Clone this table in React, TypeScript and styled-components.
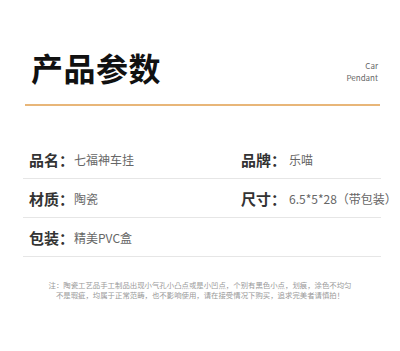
import styled, { createGlobalStyle } from 'styled-components';

const GlobalStyle = createGlobalStyle`
  body {
    margin: 0;
    background: #fff;
    font-family: "Noto Sans CJK SC", "Noto Sans", sans-serif;
  }
`;

const Page = styled.div`
  width: 400px;
  height: 351px;
  overflow: hidden;
  background: #fff;
`;

const Header = styled.header`
  display: flex;
  justify-content: space-between;
  align-items: flex-end;
  padding: 51px 22px 0 31px;
`;

const Title = styled.h1`
  margin: 0;
  font-size: 32px;
  line-height: 32px;
  font-weight: 700;
  color: #111;
  letter-spacing: 0.5px;
`;

const SubTitle = styled.div`
  font-family: "Noto Sans CJK SC", "Noto Sans", sans-serif;
  font-size: 8px;
  line-height: 11.5px;
  color: #666;
  text-align: right;
`;

const Rule = styled.div`
  margin: 21px 20px 0 25px;
  height: 2px;
  background: #e8b679;
`;

const Table = styled.div`
  margin: 34px 19px 0 23px;
`;

const Row = styled.div`
  display: grid;
  grid-template-columns: 212px 1fr;
  align-items: center;
  height: 38px;
  padding-left: 6px;
  border-bottom: 1px solid #e6e6e6;
  white-space: nowrap;
`;

const Cell = styled.div`
  display: flex;
  align-items: center;
`;

const Label = styled.span`
  font-size: 15px;
  font-weight: 700;
  color: #333;
`;

const Value = styled.span<{ $gap?: number }>`
  font-size: 12px;
  color: #666;
  margin-left: ${(p) => p.$gap ?? 0}px;
`;

const Note = styled.p`
  margin: 23px 0 0;
  text-align: center;
  font-size: 7.4px;
  line-height: 10px;
  color: #999;
`;

const specs = [
  [
    { label: '品名：', value: '七福神车挂', gap: 0 },
    { label: '品牌：', value: '乐喵', gap: 3 },
  ],
  [
    { label: '材质：', value: '陶瓷', gap: 0 },
    { label: '尺寸：', value: '6.5*5*28（带包装）', gap: 3 },
  ],
  [{ label: '包装：', value: '精美PVC盒', gap: 0 }],
];

export default function App() {
  return (
    <Page>
      <GlobalStyle />
      <Header>
        <Title>产品参数</Title>
        <SubTitle>
          Car
          <br />
          Pendant
        </SubTitle>
      </Header>
      <Rule />
      <Table>
        {specs.map((row, i) => (
          <Row key={i}>
            {row.map((c) => (
              <Cell key={c.label}>
                <Label>{c.label}</Label>
                <Value $gap={c.gap}>{c.value}</Value>
              </Cell>
            ))}
          </Row>
        ))}
      </Table>
      <Note>
        注：陶瓷工艺品手工制品出现小气孔小凸点或是小凹点，个别有黑色小点，划痕，涂色不均匀
        <br />
        不是瑕疵，均属于正常范畴，也不影响使用，请在接受情况下购买，追求完美者请慎拍！
      </Note>
    </Page>
  );
}
